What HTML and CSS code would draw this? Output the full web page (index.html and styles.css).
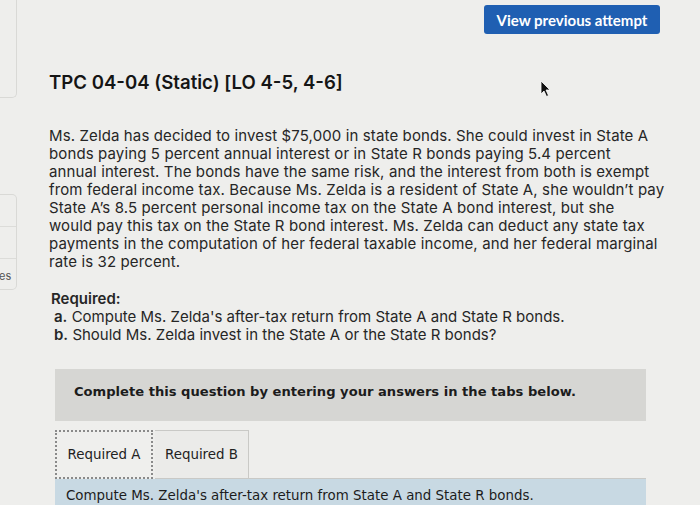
FILE: index.html
```html
<!DOCTYPE html>
<html>
<head>
<meta charset="utf-8">
<link rel="stylesheet" href="styles.css">
</head>
<body>
<div class="page">
  <aside class="side">
    <div class="side-box top"></div>
    <div class="side-box list">
      <div class="side-row"></div>
      <div class="side-row"></div>
      <div class="side-row last"><span class="side-text">es</span></div>
    </div>
  </aside>
  <main class="main">
    <div class="topbar">
      <button class="btn">View previous attempt</button>
    </div>
    <h1 class="title">TPC 04-04 (Static) [LO 4-5, 4-6]</h1>
    <p class="body">Ms. Zelda has decided to invest $75,000 in state bonds. She could invest in State A<br>bonds paying 5 percent annual interest or in State R bonds paying 5.4 percent<br>annual interest. The bonds have the same risk, and the interest from both is exempt<br>from federal income tax. Because Ms. Zelda is a resident of State A, she wouldn’t pay<br>State A’s 8.5 percent personal income tax on the State A bond interest, but she<br>would pay this tax on the State R bond interest. Ms. Zelda can deduct any state tax<br>payments in the computation of her federal taxable income, and her federal marginal<br>rate is 32 percent.</p>
    <div class="req">
      <div class="req-title">Required:</div>
      <div class="req-item"><b>a.</b> Compute Ms. Zelda's after-tax return from State A and State R bonds.</div>
      <div class="req-item"><b>b.</b> Should Ms. Zelda invest in the State A or the State R bonds?</div>
    </div>
    <div class="panel">
      <div class="instr">Complete this question by entering your answers in the tabs below.</div>
      <div class="tabs">
        <div class="tab active">Required A</div>
        <div class="tab">Required B</div>
        <div class="tab-fill"></div>
      </div>
      <div class="tab-body">Compute Ms. Zelda's after-tax return from State A and State R bonds.</div>
    </div>
  </main>
  <svg class="cursor" width="12" height="18" viewBox="0 0 12 18"><path d="M1 1 L1 14 L4 11 L6.5 16.5 L8.5 15.5 L6 10 L10 10 Z" fill="#111" stroke="#fff" stroke-width="0.8"/></svg>
</div>
</body>
</html>
```
FILE: styles.css
```css
* { box-sizing: border-box; }
html, body { margin: 0; padding: 0; }
body {
  width: 700px;
  height: 505px;
  overflow: hidden;
  background: #eeeeec;
  font-family: Inter, "Open Sans", sans-serif;
  color: #1d1d1d;
}
.page {
  position: relative;
  display: flex;
  height: 505px;
}
.side {
  width: 17px;
  flex: none;
}
.side-box {
  border: 1px solid #d9d9d6;
  border-left: none;
  border-radius: 0 5px 5px 0;
}
.side-box.top {
  height: 98px;
  border-top: none;
  border-radius: 0 0 5px 0;
}
.side-box.list {
  margin-top: 96px;
  height: 96px;
}
.side-row {
  height: 32px;
  border-bottom: 1px solid #dcdcd9;
}
.side-row.last { border-bottom: none; }
.side-text {
  display: block;
  font-size: 11px;
  color: #555;
  line-height: 11px;
  padding-top: 12px;
  margin-left: -1px;
}
.main {
  flex: 1;
  padding-left: 32px;
}
.topbar {
  display: flex;
  justify-content: flex-end;
  padding: 5px 40px 0 0;
}
.btn {
  width: 176px;
  height: 29px;
  background: #1f5fb2;
  border: none;
  border-radius: 3px;
  color: #fff;
  font-family: Lato, sans-serif;
  font-weight: 700;
  font-size: 15px;
  padding: 0;
}
.title {
  margin: 37px 0 0 0;
  font-size: 18.6px;
  font-weight: 600;
  line-height: 22px;
  color: #151515;
}
.body {
  margin: 34px 0 0 0;
  width: 640px;
  font-size: 15px;
  line-height: 18px;
  letter-spacing: 0.12px;
  color: #262626;
}
.req {
  margin-top: 19px;
  font-size: 15px;
  line-height: 18px;
  color: #262626;
}
.req-title { font-weight: 600; margin-left: 2px; }
.req-item { margin-left: 5px; }
.req-item b { font-weight: 600; }
.panel {
  margin-top: 25px;
  margin-left: 6px;
  width: 591px;
  font-family: "DejaVu Sans", Verdana, sans-serif;
}
.instr {
  background: #d6d6d3;
  height: 52px;
  padding: 15px 0 0 19px;
  font-size: 13.1px;
  font-weight: 700;
  color: #1c1c1c;
}
.tabs {
  display: flex;
  margin-top: 9px;
  height: 49px;
}
.tab {
  height: 49px;
  display: flex;
  align-items: center;
  justify-content: center;
  white-space: nowrap;
  font-size: 13.4px;
  color: #222;
  border: 1px solid #c9c9c6;
  background: #ebebe9;
}
.tab.active {
  width: 98px;
  border: 2px dotted #8a8a8a;
  background: #efefed;
}
.tab:not(.active) { margin-left: 2px; width: 94px; border-left: none; }
.tab-fill {
  flex: 1;
  border-bottom: 1px solid #c9c9c6;
}
.tab-body {
  background: #c8d9e3;
  height: 30px;
  padding: 9px 0 0 11px;
  font-size: 13.4px;
  color: #1c1c1c;
}
.cursor {
  position: absolute;
  left: 540px;
  top: 80px;
}
```
